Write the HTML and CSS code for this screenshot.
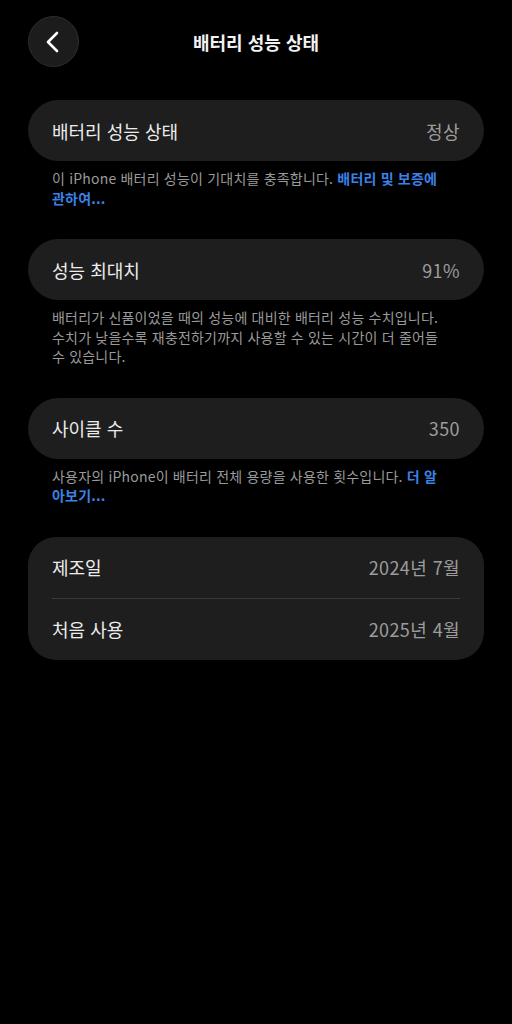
FILE: index.html
```html
<!DOCTYPE html>
<html lang="ko">
<head>
    <meta charset="UTF-8">
    <meta name="viewport" content="width=device-width, initial-scale=1.0">
    <title>배터리 성능 상태</title>
    <link rel="stylesheet" href="styles.css">
</head>
<body>
    <header class="top-bar">
        <button class="back-btn" title="뒤로">
            <svg width="20" height="24" viewBox="0 0 20 24">
                <path d="M13 3 L4 12 L13 21" fill="none" stroke="#fff" stroke-width="2.6" stroke-linecap="round" stroke-linejoin="round"/>
            </svg>
        </button>
        <div class="title">배터리 성능 상태</div>
    </header>

    <main class="content">
        <div class="card">
            <div class="row">
                <span class="label">배터리 성능 상태</span>
                <span class="value">정상</span>
            </div>
        </div>
        <p class="note">이 iPhone 배터리 성능이 기대치를 충족합니다. <a class="link">배터리 및 보증에 관하여...</a></p>

        <div class="card">
            <div class="row">
                <span class="label">성능 최대치</span>
                <span class="value">91%</span>
            </div>
        </div>
        <p class="note">배터리가 신품이었을 때의 성능에 대비한 배터리 성능 수치입니다. 수치가 낮을수록 재충전하기까지 사용할 수 있는 시간이 더 줄어들 수 있습니다.</p>

        <div class="card">
            <div class="row">
                <span class="label">사이클 수</span>
                <span class="value">350</span>
            </div>
        </div>
        <p class="note">사용자의 iPhone이 배터리 전체 용량을 사용한 횟수입니다. <a class="link">더 알아보기...</a></p>

        <div class="card card-group">
            <div class="row">
                <span class="label">제조일</span>
                <span class="value">2024년 7월</span>
            </div>
            <div class="divider"></div>
            <div class="row">
                <span class="label">처음 사용</span>
                <span class="value">2025년 4월</span>
            </div>
        </div>
    </main>
</body>
</html>
```

FILE: styles.css
```css
* {
    margin: 0;
    padding: 0;
    box-sizing: border-box;
    font-family: "Noto Sans CJK KR", "Noto Sans", sans-serif;
}

body {
    background-color: #000;
    color: #fff;
    min-height: 100vh;
}

.top-bar {
    position: relative;
    display: flex;
    align-items: center;
    justify-content: center;
    height: 84px;
    padding: 0 28px;
}

.back-btn {
    position: absolute;
    left: 28px;
    top: 16px;
    width: 51px;
    height: 51px;
    border-radius: 50%;
    background-color: #1c1c1c;
    border: 1px solid #2e2e2e;
    display: flex;
    align-items: center;
    justify-content: center;
    cursor: pointer;
}

.title {
    font-size: 18px;
    font-weight: bold;
    color: #f2f2f2;
}

.content {
    padding: 16px 28px 0;
}

.card {
    background-color: #1e1e1e;
    border-radius: 31px;
}

.card-group {
    border-radius: 28px;
}

.row {
    display: flex;
    justify-content: space-between;
    align-items: center;
    height: 61px;
    padding: 0 24px;
}

.label {
    font-size: 18px;
    color: #ececec;
}

.value {
    font-size: 18px;
    color: #9c9c9c;
    letter-spacing: 0.4px;
}

.divider {
    height: 1px;
    background-color: #3a3a3c;
    margin: 0 24px;
}

.note {
    font-size: 14px;
    line-height: 19.5px;
    letter-spacing: 0.2px;
    color: #9a9a9a;
    padding: 8px 42px 31px 24px;
}

.link {
    color: #3b82e6;
    font-weight: bold;
}
```
